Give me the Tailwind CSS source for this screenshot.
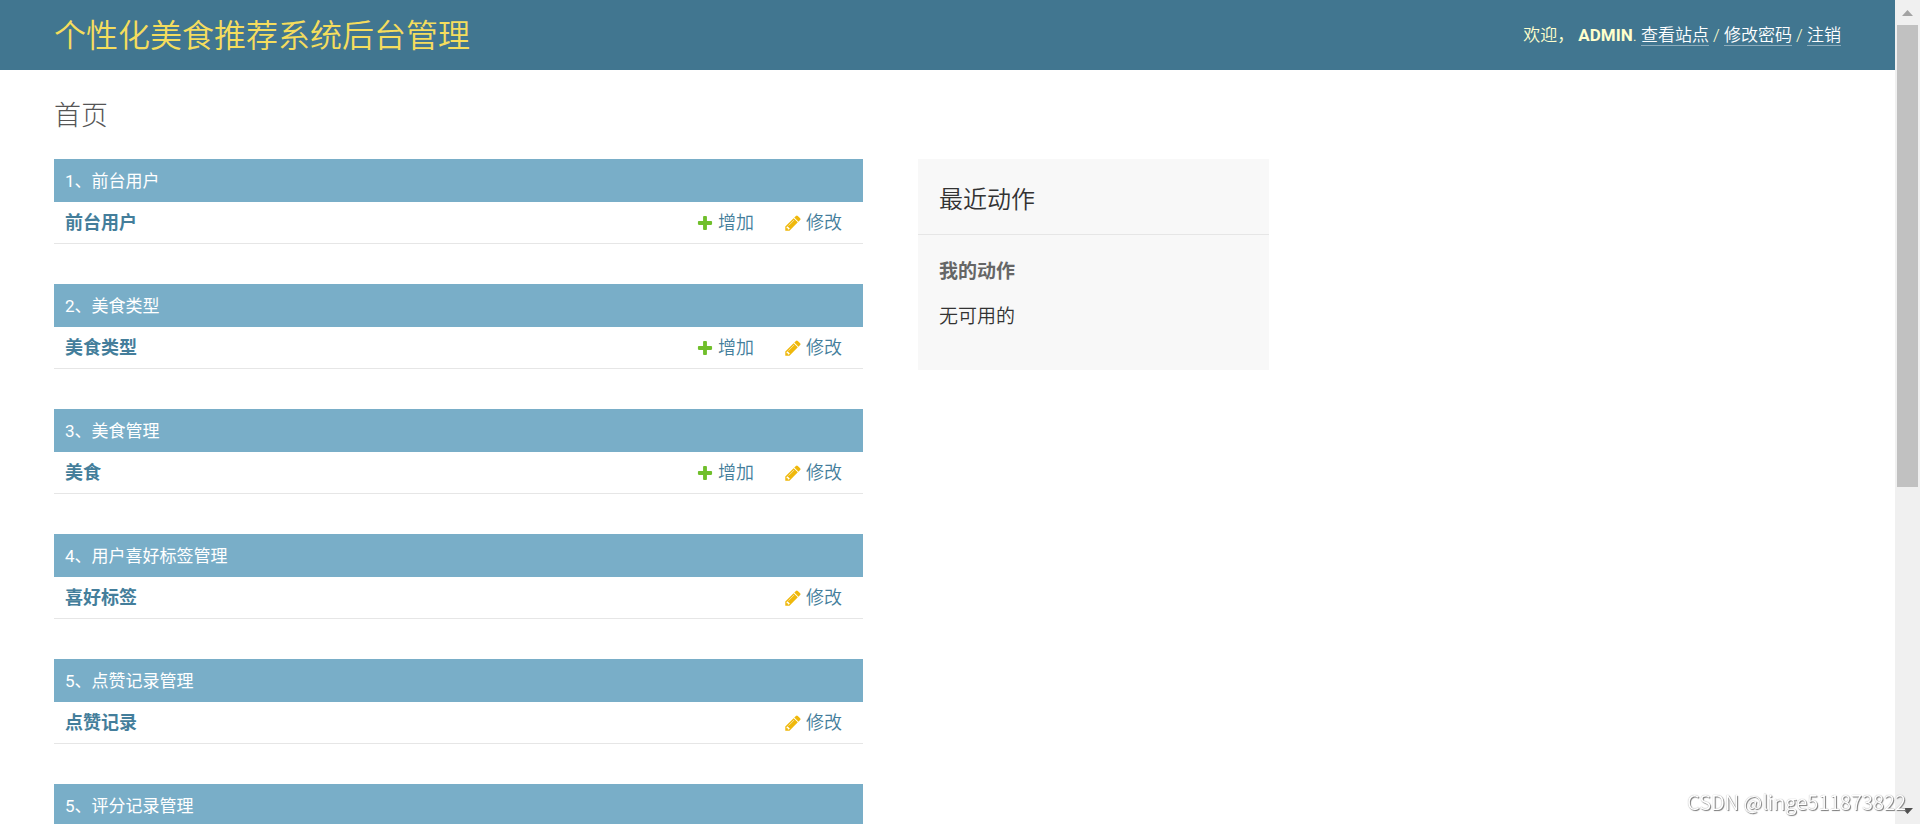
<!DOCTYPE html>
<html lang="zh-CN">
<head>
  <meta charset="UTF-8" />
  <meta name="viewport" content="width=device-width, initial-scale=1" />
  <title>个性化美食推荐系统后台管理</title>
  <script src="https://cdn.jsdelivr.net/npm/@tailwindcss/browser@4"></script>
</head>
<body class="flex h-screen overflow-hidden bg-white font-['Roboto','Noto_Sans_CJK_SC',sans-serif] font-[350] text-[#333]">

  <!-- Icons -->
  <svg class="hidden">
    <symbol id="icon-add" viewBox="0 0 1792 1792">
      <path fill="#70bf2b" d="M1600 796v192q0 40-28 68t-68 28h-416v416q0 40-28 68t-68 28h-192q-40 0-68-28t-28-68v-416h-416q-40 0-68-28t-28-68v-192q0-40 28-68t68-28h416v-416q0-40 28-68t68-28h192q40 0 68 28t28 68v416h416q40 0 68 28t28 68z" />
    </symbol>
    <symbol id="icon-change" viewBox="0 0 1792 1792">
      <path fill="#efb80b" d="M491 1536l91-91-235-235-91 91v107h128v128h107zm523-928q0-22-22-22-10 0-17 7l-542 542q-7 7-7 17 0 22 22 22 10 0 17-7l542-542q7-7 7-17zm-54-192l416 416-832 832h-416v-416zm683 96q0 53-37 90l-166 166-416-416 166-165q36-38 90-38 53 0 91 38l235 234q37 39 37 91z" />
    </symbol>
  </svg>

  <div class="min-w-0 flex-1 overflow-hidden">
    <header class="flex h-[70px] items-center justify-between bg-[#417690] px-[54px] text-[#ffc]">
      <h1 class="pt-0.5 text-[32px] leading-10 text-[#f5dd5d]">个性化美食推荐系统后台管理</h1>
      <div class="text-[17px] leading-6 whitespace-nowrap">
        欢迎，
        <strong class="font-bold">ADMIN</strong>.
        <a href="#" class="inline-block border-b border-white/40 leading-5 text-white">查看站点</a> /
        <a href="#" class="inline-block border-b border-white/40 leading-5 text-white">修改密码</a> /
        <a href="#" class="inline-block border-b border-white/40 leading-5 text-white">注销</a>
      </div>
    </header>

    <main class="px-[54px] pt-[27px]">
      <h2 class="mb-6 text-[27px] leading-[38px] font-light text-[#555]">首页</h2>

      <div class="flex items-start gap-[55px]">
        <div class="flex max-w-[809px] flex-1 flex-col gap-10">

          <table class="w-full border-separate border-spacing-0 text-[18px]">
            <caption class="h-[43px] bg-[#79aec8] px-[11px] pt-0.5 text-left text-[17px] leading-[41px] font-normal text-white"><a href="#">1、前台用户</a></caption>
            <tr class="h-[42px] text-[#447e9b]">
              <th scope="row" class="border-b border-[#e6e6e6] pl-[11px] text-left font-bold"><a href="#">前台用户</a></th>
              <td class="w-[88px] border-b border-[#e6e6e6]"><a href="#" class="flex items-center gap-1"><svg class="size-[18px]"><use href="#icon-add" /></svg>增加</a></td>
              <td class="w-[79px] border-b border-[#e6e6e6]"><a href="#" class="flex items-center gap-1"><svg class="size-[18px]"><use href="#icon-change" /></svg>修改</a></td>
            </tr>
          </table>

          <table class="w-full border-separate border-spacing-0 text-[18px]">
            <caption class="h-[43px] bg-[#79aec8] px-[11px] pt-0.5 text-left text-[17px] leading-[41px] font-normal text-white"><a href="#">2、美食类型</a></caption>
            <tr class="h-[42px] text-[#447e9b]">
              <th scope="row" class="border-b border-[#e6e6e6] pl-[11px] text-left font-bold"><a href="#">美食类型</a></th>
              <td class="w-[88px] border-b border-[#e6e6e6]"><a href="#" class="flex items-center gap-1"><svg class="size-[18px]"><use href="#icon-add" /></svg>增加</a></td>
              <td class="w-[79px] border-b border-[#e6e6e6]"><a href="#" class="flex items-center gap-1"><svg class="size-[18px]"><use href="#icon-change" /></svg>修改</a></td>
            </tr>
          </table>

          <table class="w-full border-separate border-spacing-0 text-[18px]">
            <caption class="h-[43px] bg-[#79aec8] px-[11px] pt-0.5 text-left text-[17px] leading-[41px] font-normal text-white"><a href="#">3、美食管理</a></caption>
            <tr class="h-[42px] text-[#447e9b]">
              <th scope="row" class="border-b border-[#e6e6e6] pl-[11px] text-left font-bold"><a href="#">美食</a></th>
              <td class="w-[88px] border-b border-[#e6e6e6]"><a href="#" class="flex items-center gap-1"><svg class="size-[18px]"><use href="#icon-add" /></svg>增加</a></td>
              <td class="w-[79px] border-b border-[#e6e6e6]"><a href="#" class="flex items-center gap-1"><svg class="size-[18px]"><use href="#icon-change" /></svg>修改</a></td>
            </tr>
          </table>

          <table class="w-full border-separate border-spacing-0 text-[18px]">
            <caption class="h-[43px] bg-[#79aec8] px-[11px] pt-0.5 text-left text-[17px] leading-[41px] font-normal text-white"><a href="#">4、用户喜好标签管理</a></caption>
            <tr class="h-[42px] text-[#447e9b]">
              <th scope="row" class="border-b border-[#e6e6e6] pl-[11px] text-left font-bold"><a href="#">喜好标签</a></th>
              <td class="w-[88px] border-b border-[#e6e6e6]"></td>
              <td class="w-[79px] border-b border-[#e6e6e6]"><a href="#" class="flex items-center gap-1"><svg class="size-[18px]"><use href="#icon-change" /></svg>修改</a></td>
            </tr>
          </table>

          <table class="w-full border-separate border-spacing-0 text-[18px]">
            <caption class="h-[43px] bg-[#79aec8] px-[11px] pt-0.5 text-left text-[17px] leading-[41px] font-normal text-white"><a href="#">5、点赞记录管理</a></caption>
            <tr class="h-[42px] text-[#447e9b]">
              <th scope="row" class="border-b border-[#e6e6e6] pl-[11px] text-left font-bold"><a href="#">点赞记录</a></th>
              <td class="w-[88px] border-b border-[#e6e6e6]"></td>
              <td class="w-[79px] border-b border-[#e6e6e6]"><a href="#" class="flex items-center gap-1"><svg class="size-[18px]"><use href="#icon-change" /></svg>修改</a></td>
            </tr>
          </table>

          <table class="w-full border-separate border-spacing-0 text-[18px]">
            <caption class="h-[43px] bg-[#79aec8] px-[11px] pt-0.5 text-left text-[17px] leading-[41px] font-normal text-white"><a href="#">5、评分记录管理</a></caption>
          </table>
        </div>

        <aside class="w-[351px] shrink-0 bg-[#f8f8f8] pb-[39px]">
          <h2 class="border-b border-[#e6e6e6] px-[21px] pt-[23px] pb-4 text-[24px] leading-9">最近动作</h2>
          <h3 class="px-[21px] pt-[23px] text-[19px] leading-7 font-bold text-[#666]">我的动作</h3>
          <p class="px-[21px] pt-[17px] text-[19px] leading-7">无可用的</p>
        </aside>
      </div>
    </main>
  </div>

  <!-- Scrollbar -->
  <div class="flex w-[25px] shrink-0 flex-col items-center bg-[#f0f0f0]">
    <svg class="h-[25px] w-[21px] shrink-0" viewBox="0 0 21 25"><path fill="#a3a3a3" d="M10.500 10l5.500 6h-11z" /></svg>
    <div class="h-[58%] max-h-[462px] w-[21px] bg-[#c1c1c1]"></div>
    <svg class="mt-auto h-[25px] w-[21px] shrink-0" viewBox="0 0 21 25"><path fill="#505050" d="M5 9h11l-5.500 6z" /></svg>
  </div>

  <div class="fixed right-[14px] bottom-2 font-['Noto_Sans_CJK_SC',sans-serif] text-[20px] leading-7 text-white [text-shadow:1px_1px_1px_#777,0_0_1px_#999]">CSDN @linge511873822</div>

</body>
</html>
